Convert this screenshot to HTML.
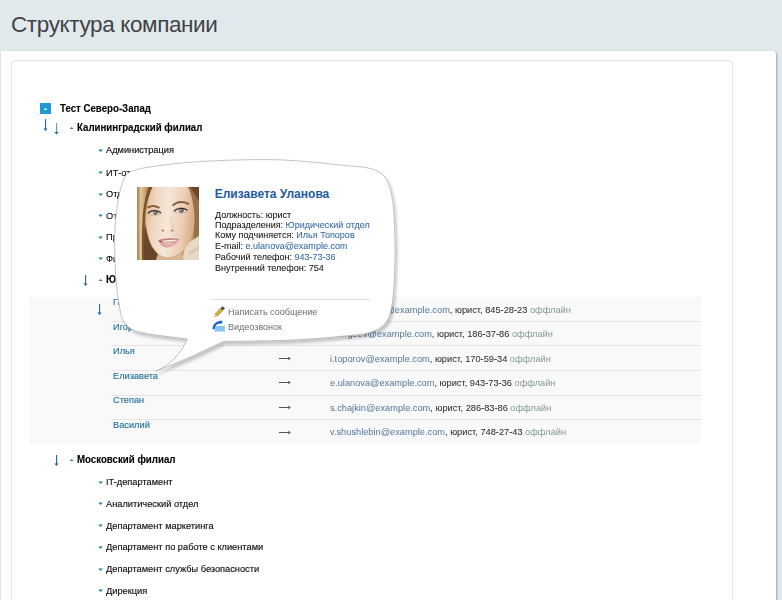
<!DOCTYPE html>
<html><head><meta charset="utf-8">
<style>
html,body{margin:0;padding:0;width:782px;height:600px;overflow:hidden;background:#e2e9ec;font-family:"Liberation Sans",sans-serif;}
.abs{position:absolute;}
#title{left:11px;top:12.4px;font-size:22.5px;letter-spacing:-0.38px;color:#404346;white-space:nowrap;}
#panel{left:0;top:51px;width:776px;height:600px;background:#fff;border-top-right-radius:4px;box-shadow:2px 0 2px -1px rgba(0,0,0,0.3);border-left:1px solid #e4e4e4;box-sizing:border-box;}
#card{left:11px;top:60px;width:722px;height:600px;border:1px solid #e4e4e4;border-radius:4px;box-sizing:border-box;}
.t{position:absolute;white-space:nowrap;color:#0a0a0a;transform-origin:0 0;-webkit-text-stroke:0.14px currentColor;}
.lnk{color:#5a7c9f;}
.lnk2{color:#3468a6;}
.gray{color:#889b9f;}
.tri{position:absolute;width:0;height:0;border-left:2.5px solid transparent;border-right:2.5px solid transparent;}
#tbl{left:29px;top:297px;width:672px;height:147px;background:#f9f9f9;}
.row{position:absolute;left:111px;width:590px;height:1px;background:#e5e5e5;}
</style></head><body>
<div id="title" class="abs">Структура компании</div>
<div id="panel" class="abs"></div>
<div id="card" class="abs"></div>
<div id="tbl" class="abs"></div>
<div class="abs" style="left:40px;top:103px;width:11px;height:11px;background:#1e9bd7;"></div>
<svg class="abs" style="left:40px;top:103px" width="11" height="11"><path d="M3.6,7 H7.4 L5.5,5 Z" fill="#fff"/></svg>
<div class="t " style="left:59.90px;top:101.93px;font-size:10.3px;line-height:14px;letter-spacing:0px;word-spacing:0px;transform:scaleX(0.94);font-weight:bold;color:#000;-webkit-text-stroke:0.12px #000;">Тест Северо-Запад</div>
<svg class="abs" style="left:43.0px;top:119px" width="5" height="12" viewBox="0 0 5 12"><rect x="2" y="0" width="1.1" height="10.5" fill="#23698f"/><path d="M0.4,9.6 L4.6,9.6 L2.5,12 Z" fill="#23698f"/></svg>
<svg class="abs" style="left:54.0px;top:123px" width="5" height="11.5" viewBox="0 0 5 11.5"><rect x="2" y="0" width="1.1" height="10.0" fill="#4fa3c8"/><path d="M0.4,9.1 L4.6,9.1 L2.5,11.5 Z" fill="#1f6a8f"/></svg>
<svg class="abs" style="left:68.5px;top:126.2px" width="6" height="4"><path d="M0.6,3.0 H4.6 L2.6,0.9 Z" fill="#2a7ca6"/></svg>
<div class="t " style="left:76.60px;top:121.33px;font-size:10.3px;line-height:14px;letter-spacing:0px;word-spacing:0px;transform:scaleX(0.94);font-weight:bold;color:#000;-webkit-text-stroke:0.12px #000;">Калининградский филиал</div>
<svg class="abs" style="left:97.5px;top:148.6px" width="6" height="4"><path d="M0.2,0.6 H4.9 L2.55,3.1 Z" fill="#2a7ca6"/></svg>
<div class="t " style="left:106.30px;top:143.27px;font-size:9.9px;line-height:14px;letter-spacing:0px;word-spacing:0px;transform:scaleX(0.936);">Администрация</div>
<svg class="abs" style="left:97.5px;top:170.9px" width="6" height="4"><path d="M0.2,0.6 H4.9 L2.55,3.1 Z" fill="#2a7ca6"/></svg>
<div class="t " style="left:106.30px;top:165.57px;font-size:9.9px;line-height:14px;letter-spacing:0px;word-spacing:0px;transform:scaleX(0.936);">ИТ-отдел</div>
<svg class="abs" style="left:97.5px;top:192.65px" width="6" height="4"><path d="M0.2,0.6 H4.9 L2.55,3.1 Z" fill="#2a7ca6"/></svg>
<div class="t " style="left:106.30px;top:187.32px;font-size:9.9px;line-height:14px;letter-spacing:0px;word-spacing:0px;transform:scaleX(0.936);">Отдел продаж</div>
<svg class="abs" style="left:97.5px;top:214.4px" width="6" height="4"><path d="M0.2,0.6 H4.9 L2.55,3.1 Z" fill="#2a7ca6"/></svg>
<div class="t " style="left:106.30px;top:209.07px;font-size:9.9px;line-height:14px;letter-spacing:0px;word-spacing:0px;transform:scaleX(0.936);">Отдел кадров</div>
<svg class="abs" style="left:97.5px;top:235.5px" width="6" height="4"><path d="M0.2,0.6 H4.9 L2.55,3.1 Z" fill="#2a7ca6"/></svg>
<div class="t " style="left:106.30px;top:230.17px;font-size:9.9px;line-height:14px;letter-spacing:0px;word-spacing:0px;transform:scaleX(0.936);">Производство</div>
<svg class="abs" style="left:97.5px;top:257.2px" width="6" height="4"><path d="M0.2,0.6 H4.9 L2.55,3.1 Z" fill="#2a7ca6"/></svg>
<div class="t " style="left:106.30px;top:251.87px;font-size:9.9px;line-height:14px;letter-spacing:0px;word-spacing:0px;transform:scaleX(0.936);">Финансовый отдел</div>
<svg class="abs" style="left:82.5px;top:275px" width="5" height="11" viewBox="0 0 5 11"><rect x="2" y="0" width="1.1" height="9.5" fill="#23698f"/><path d="M0.4,8.6 L4.6,8.6 L2.5,11 Z" fill="#23698f"/></svg>
<svg class="abs" style="left:97.5px;top:277.5px" width="6" height="4"><path d="M0.6,3.0 H4.6 L2.6,0.9 Z" fill="#2a7ca6"/></svg>
<div class="t " style="left:106.00px;top:273.03px;font-size:10.3px;line-height:14px;letter-spacing:0px;word-spacing:0px;transform:scaleX(0.94);font-weight:bold;color:#000;-webkit-text-stroke:0.12px #000;">Юридический отдел</div>
<svg class="abs" style="left:97.0px;top:304px" width="5" height="11" viewBox="0 0 5 11"><rect x="2" y="0" width="1.1" height="9.5" fill="#23698f"/><path d="M0.4,8.6 L4.6,8.6 L2.5,11 Z" fill="#23698f"/></svg>
<div class="t " style="left:112.50px;top:295.27px;font-size:9.9px;line-height:14px;letter-spacing:0px;word-spacing:0px;transform:scaleX(0.936);color:#24739e;">Галина</div>
<svg class="abs" style="left:278px;top:307px" width="14" height="5"><path d="M1,2.5 H12 M10.3,1.2 L12.3,2.5 L10.3,3.8" stroke="#555" stroke-width="1" fill="none"/></svg>
<div class="t " style="left:329.50px;top:302.87px;font-size:9.9px;line-height:14px;letter-spacing:0px;word-spacing:0px;transform:scaleX(0.936);color:#2c2c2c;-webkit-text-stroke:0.04px currentColor;"><span class="lnk">g.shamshurin@example.com</span>, юрист, 845-28-23 <span class="gray">оффлайн</span></div>
<div class="row" style="top:321px"></div>
<div class="t " style="left:112.50px;top:319.77px;font-size:9.9px;line-height:14px;letter-spacing:0px;word-spacing:0px;transform:scaleX(0.936);color:#24739e;">Игорь</div>
<svg class="abs" style="left:278px;top:332px" width="14" height="5"><path d="M1,2.5 H12 M10.3,1.2 L12.3,2.5 L10.3,3.8" stroke="#555" stroke-width="1" fill="none"/></svg>
<div class="t " style="left:329.50px;top:327.37px;font-size:9.9px;line-height:14px;letter-spacing:0px;word-spacing:0px;transform:scaleX(0.936);color:#2c2c2c;-webkit-text-stroke:0.04px currentColor;"><span class="lnk">i.sergeev@example.com</span>, юрист, 186-37-86 <span class="gray">оффлайн</span></div>
<div class="row" style="top:345px"></div>
<div class="t " style="left:112.50px;top:344.27px;font-size:9.9px;line-height:14px;letter-spacing:0px;word-spacing:0px;transform:scaleX(0.936);color:#24739e;">Илья</div>
<svg class="abs" style="left:278px;top:356px" width="14" height="5"><path d="M1,2.5 H12 M10.3,1.2 L12.3,2.5 L10.3,3.8" stroke="#555" stroke-width="1" fill="none"/></svg>
<div class="t " style="left:329.50px;top:351.87px;font-size:9.9px;line-height:14px;letter-spacing:0px;word-spacing:0px;transform:scaleX(0.936);color:#2c2c2c;-webkit-text-stroke:0.04px currentColor;"><span class="lnk">i.toporov@example.com</span>, юрист, 170-59-34 <span class="gray">оффлайн</span></div>
<div class="row" style="top:370px"></div>
<div class="t " style="left:112.50px;top:368.77px;font-size:9.9px;line-height:14px;letter-spacing:0px;word-spacing:0px;transform:scaleX(0.936);color:#24739e;">Елизавета</div>
<svg class="abs" style="left:278px;top:380px" width="14" height="5"><path d="M1,2.5 H12 M10.3,1.2 L12.3,2.5 L10.3,3.8" stroke="#555" stroke-width="1" fill="none"/></svg>
<div class="t " style="left:329.50px;top:376.37px;font-size:9.9px;line-height:14px;letter-spacing:0px;word-spacing:0px;transform:scaleX(0.936);color:#2c2c2c;-webkit-text-stroke:0.04px currentColor;"><span class="lnk">e.ulanova@example.com</span>, юрист, 943-73-36 <span class="gray">оффлайн</span></div>
<div class="row" style="top:395px"></div>
<div class="t " style="left:112.50px;top:393.27px;font-size:9.9px;line-height:14px;letter-spacing:0px;word-spacing:0px;transform:scaleX(0.936);color:#24739e;">Степан</div>
<svg class="abs" style="left:278px;top:405px" width="14" height="5"><path d="M1,2.5 H12 M10.3,1.2 L12.3,2.5 L10.3,3.8" stroke="#555" stroke-width="1" fill="none"/></svg>
<div class="t " style="left:329.50px;top:400.87px;font-size:9.9px;line-height:14px;letter-spacing:0px;word-spacing:0px;transform:scaleX(0.936);color:#2c2c2c;-webkit-text-stroke:0.04px currentColor;"><span class="lnk">s.chajkin@example.com</span>, юрист, 286-83-86 <span class="gray">оффлайн</span></div>
<div class="row" style="top:419px"></div>
<div class="t " style="left:112.50px;top:417.77px;font-size:9.9px;line-height:14px;letter-spacing:0px;word-spacing:0px;transform:scaleX(0.936);color:#24739e;">Василий</div>
<svg class="abs" style="left:278px;top:430px" width="14" height="5"><path d="M1,2.5 H12 M10.3,1.2 L12.3,2.5 L10.3,3.8" stroke="#555" stroke-width="1" fill="none"/></svg>
<div class="t " style="left:329.50px;top:425.37px;font-size:9.9px;line-height:14px;letter-spacing:0px;word-spacing:0px;transform:scaleX(0.936);color:#2c2c2c;-webkit-text-stroke:0.04px currentColor;"><span class="lnk">v.shushlebin@example.com</span>, юрист, 748-27-43 <span class="gray">оффлайн</span></div>
<svg class="abs" style="left:53.5px;top:455px" width="5" height="11" viewBox="0 0 5 11"><rect x="2" y="0" width="1.1" height="9.5" fill="#23698f"/><path d="M0.4,8.6 L4.6,8.6 L2.5,11 Z" fill="#23698f"/></svg>
<svg class="abs" style="left:68.5px;top:458px" width="6" height="4"><path d="M0.6,3.0 H4.6 L2.6,0.9 Z" fill="#2a7ca6"/></svg>
<div class="t " style="left:77.00px;top:452.93px;font-size:10.3px;line-height:14px;letter-spacing:0px;word-spacing:0px;transform:scaleX(0.94);font-weight:bold;color:#000;-webkit-text-stroke:0.12px #000;">Московский филиал</div>
<svg class="abs" style="left:97.5px;top:480.7px" width="6" height="4"><path d="M0.2,0.6 H4.9 L2.55,3.1 Z" fill="#2a7ca6"/></svg>
<div class="t " style="left:106.30px;top:475.37px;font-size:9.9px;line-height:14px;letter-spacing:0px;word-spacing:0px;transform:scaleX(0.936);">IT-департамент</div>
<svg class="abs" style="left:97.5px;top:502.4px" width="6" height="4"><path d="M0.2,0.6 H4.9 L2.55,3.1 Z" fill="#2a7ca6"/></svg>
<div class="t " style="left:106.30px;top:497.07px;font-size:9.9px;line-height:14px;letter-spacing:0px;word-spacing:0px;transform:scaleX(0.936);">Аналитический отдел</div>
<svg class="abs" style="left:97.5px;top:524.1px" width="6" height="4"><path d="M0.2,0.6 H4.9 L2.55,3.1 Z" fill="#2a7ca6"/></svg>
<div class="t " style="left:106.30px;top:518.77px;font-size:9.9px;line-height:14px;letter-spacing:0px;word-spacing:0px;transform:scaleX(0.936);">Департамент маркетинга</div>
<svg class="abs" style="left:97.5px;top:545.8px" width="6" height="4"><path d="M0.2,0.6 H4.9 L2.55,3.1 Z" fill="#2a7ca6"/></svg>
<div class="t " style="left:106.30px;top:540.47px;font-size:9.9px;line-height:14px;letter-spacing:0px;word-spacing:0px;transform:scaleX(0.936);">Департамент по работе с клиентами</div>
<svg class="abs" style="left:97.5px;top:567.5px" width="6" height="4"><path d="M0.2,0.6 H4.9 L2.55,3.1 Z" fill="#2a7ca6"/></svg>
<div class="t " style="left:106.30px;top:562.17px;font-size:9.9px;line-height:14px;letter-spacing:0px;word-spacing:0px;transform:scaleX(0.936);">Департамент службы безопасности</div>
<svg class="abs" style="left:97.5px;top:589.1999999999999px" width="6" height="4"><path d="M0.2,0.6 H4.9 L2.55,3.1 Z" fill="#2a7ca6"/></svg>
<div class="t " style="left:106.30px;top:583.87px;font-size:9.9px;line-height:14px;letter-spacing:0px;word-spacing:0px;transform:scaleX(0.936);">Дирекция</div>
<svg class="abs" style="left:0;top:0" width="782" height="600">
<defs><filter id="sh" x="-10%" y="-10%" width="130%" height="130%"><feGaussianBlur in="SourceAlpha" stdDeviation="1.8"/><feOffset dx="1.5" dy="3"/><feComponentTransfer><feFuncA type="linear" slope="0.22"/></feComponentTransfer><feMerge><feMergeNode/><feMergeNode in="SourceGraphic"/></feMerge></filter></defs>
<path d="M123.2,180.5 C124.5,177.0 125.5,175.9 127.2,174.2 C128.9,172.5 129.7,171.7 133.5,170.5 C137.3,169.3 140.6,168.4 150.0,167.0 C159.4,165.6 174.2,163.5 190.0,162.3 C205.8,161.1 228.5,160.1 245.0,159.8 C261.5,159.5 271.5,159.3 289.0,160.3 C306.5,161.3 336.8,164.7 350.0,166.0 C363.2,167.3 363.0,166.9 368.0,168.0 C373.0,169.1 376.8,170.4 380.0,172.5 C383.2,174.6 385.2,177.0 387.0,180.3 C388.8,183.6 389.9,187.6 391.0,192.3 C392.1,197.0 392.9,201.4 393.5,208.3 C394.1,215.2 394.6,225.5 394.8,233.7 C395.1,241.9 395.1,248.9 395.0,257.5 C394.9,266.1 394.5,277.4 394.0,285.0 C393.5,292.6 393.1,297.9 392.2,303.4 C391.3,308.9 390.3,314.0 388.5,318.0 C386.7,322.0 384.6,324.7 381.2,327.2 C377.8,329.7 373.5,331.4 368.3,332.8 C363.1,334.2 362.6,334.3 350.0,335.5 C337.4,336.7 314.1,339.0 293.0,340.0 C271.9,341.0 235.1,341.2 223.5,341.4 Q192,357 156,371.4 Q178,361.3 187.5,339 C181.0,338.1 157.7,335.5 148.4,333.8 C139.1,332.1 135.8,331.6 131.5,329.0 C127.2,326.4 124.5,323.2 122.3,318.4 C120.1,313.6 119.3,304.7 118.4,300.0 C117.5,295.3 117.5,295.0 117.0,290.0 C116.5,285.0 115.8,278.3 115.4,270.0 C115.0,261.7 114.5,249.2 114.6,240.0 C114.7,230.8 115.2,222.5 116.0,215.0 C116.8,207.5 118.1,200.8 119.3,195.0 C120.5,189.2 121.9,184.0 123.2,180.5 Z" fill="#fff" stroke="#b4b4b4" stroke-width="0.8" filter="url(#sh)"/>
</svg>
<svg class="abs" style="left:137px;top:187px" width="62" height="73" viewBox="0 0 62 73">
<defs>
<linearGradient id="skin" x1="0" y1="0" x2="1" y2="0.15">
<stop offset="0" stop-color="#e0b898"/><stop offset="0.22" stop-color="#f0d6c0"/><stop offset="0.5" stop-color="#f6e6d8"/><stop offset="0.8" stop-color="#eccfb6"/><stop offset="1" stop-color="#d9b08c"/>
</linearGradient>
<linearGradient id="hairL" x1="0" y1="0" x2="1" y2="0">
<stop offset="0" stop-color="#a8845c"/><stop offset="0.3" stop-color="#dcbe8e"/><stop offset="0.6" stop-color="#c29464"/><stop offset="1" stop-color="#b88a5c"/>
</linearGradient>
<radialGradient id="lip" cx="0.5" cy="0.6" r="0.55"><stop offset="0" stop-color="#ecbcb6"/><stop offset="1" stop-color="#d0948e"/></radialGradient>
<filter id="soft" x="0" y="0" width="100%" height="100%"><feGaussianBlur stdDeviation="0.5"/></filter>
</defs>
<g filter="url(#soft)">
<rect width="62" height="73" fill="#c49a6c"/>
<path d="M0,0 H16 C12,20 9,45 8,73 H0 Z" fill="url(#hairL)"/>
<path d="M3,0 H5 C4,25 4,50 4.5,73 H3 C2.5,50 2.5,25 3,0Z" fill="#e6cc9c" opacity="0.8"/>
<path d="M11.5,0 H16 C12,8 9.5,16 8.5,24 C7.5,34 7.5,50 8,73 H5 C4.8,55 5,38 6,26 C7,16 9,7 11.5,0 Z" fill="#7a5232"/>
<path d="M8,36 C9.5,46 11.5,54 15,60 C17,63 19,65 21,67 L19,73 H7 C7,60 7,48 8,36Z" fill="#6a452a"/>
<path d="M49,0 H62 V58 H56 C58,40 57,18 49,0Z" fill="#9a6e46"/>
<path d="M53,0 H62 V14 C59,9 56,4 53,0Z" fill="#6a4628"/>
<path d="M49,57 L62,49 V73 H45 Z" fill="#e6dac4"/>
<path d="M51,65 L62,59 V63 L53,68 Z" fill="#d8cab0"/>
<path d="M15.5,0 H51 C55,8 58,22 57.5,34 C57,48 52,60 42,67 C37,70.5 30,71 25,69.5 C19,66 15,60 13.5,55 C11,48 9,40 9,35 C9,22 11,10 15.5,0 Z" fill="url(#skin)"/>
<path d="M21,67 C27,71 35,72 44,65 L47,73 H19 Z" fill="#d8b490"/>
<path d="M10.5,20.6 C13.5,18.6 18,18.4 22.5,20.8" stroke="#8a5c38" stroke-width="1.9" fill="none"/>
<path d="M35.5,18.6 C40,14.6 46,14.1 52,17.2" stroke="#8a5c38" stroke-width="1.9" fill="none"/>
<ellipse cx="17.5" cy="25.5" rx="7" ry="3.6" fill="#c89a80" opacity="0.45"/>
<ellipse cx="43.8" cy="23.5" rx="7" ry="3.6" fill="#c89a80" opacity="0.45"/>
<path d="M12,26 C14.5,23.8 20,23.6 23.2,26.2 C20,28.2 15,28.1 12,26Z" fill="#e2d8d2"/>
<ellipse cx="18.4" cy="25.8" rx="2.4" ry="2.1" fill="#5f676b"/>
<circle cx="17.6" cy="25.4" r="0.7" fill="#dfe6e8"/>
<path d="M11,26.2 C14,22.8 20.5,22.6 24,26" stroke="#3e2c22" stroke-width="1.3" fill="none"/>
<path d="M38,24 C40.5,21.6 46,21.4 49.6,23.2 C46.5,26.2 41,26.4 38,24Z" fill="#e2d8d2"/>
<ellipse cx="44.4" cy="23.7" rx="2.5" ry="2.1" fill="#5c656c"/>
<circle cx="43.6" cy="23.3" r="0.7" fill="#dfe6e8"/>
<path d="M37,24.3 C40,20.8 46.5,20.5 50.5,23.3" stroke="#3e2c22" stroke-width="1.3" fill="none"/>
<path d="M33.5,30 C35,35 36.5,39 36,42" stroke="#e2c0a6" stroke-width="2" fill="none" opacity="0.45"/>
<ellipse cx="30.5" cy="41.5" rx="3.5" ry="2" fill="#f8ece2" opacity="0.6"/>
<ellipse cx="25.8" cy="43.5" rx="1.6" ry="0.9" fill="#b88a72"/>
<ellipse cx="35.2" cy="43.5" rx="1.6" ry="0.9" fill="#b88a72"/>
<path d="M21.5,53.5 C26,50.8 35,50.4 42,52.2 C40,57.8 34,60.6 29.5,60.4 C25,60 22.5,57 21.5,53.5Z" fill="url(#lip)"/>
<path d="M25,54.4 C29,53.6 35,53.3 40,53.1" stroke="#f6ece8" stroke-width="1.2" fill="none"/>
<path d="M21.8,54 C23,54.6 24.5,54.8 25.5,54.4" stroke="#7a4040" stroke-width="1" fill="none"/>
<path d="M21.5,53.5 C26,52.8 35,52.2 42,52.2" stroke="#a87070" stroke-width="0.6" fill="none"/>
</g>
</svg>
<div class="t " style="left:214.70px;top:187.34px;font-size:12px;line-height:14px;letter-spacing:0px;word-spacing:0px;color:#1d5c9f;font-weight:bold;-webkit-text-stroke:0px currentColor;">Елизавета Уланова</div>
<div class="t " style="left:214.70px;top:207.57px;font-size:9.6px;line-height:14px;letter-spacing:0px;word-spacing:0px;transform:scaleX(0.94);color:#111;-webkit-text-stroke:0.06px currentColor;">Должность: юрист</div>
<div class="t " style="left:214.70px;top:217.97px;font-size:9.6px;line-height:14px;letter-spacing:0px;word-spacing:0px;transform:scaleX(0.94);color:#111;-webkit-text-stroke:0.06px currentColor;">Подразделения: <span class="lnk2">Юридический отдел</span></div>
<div class="t " style="left:214.70px;top:228.27px;font-size:9.6px;line-height:14px;letter-spacing:0px;word-spacing:0px;transform:scaleX(0.94);color:#111;-webkit-text-stroke:0.06px currentColor;">Кому подчиняется: <span class="lnk2">Илья Топоров</span></div>
<div class="t " style="left:214.70px;top:239.17px;font-size:9.6px;line-height:14px;letter-spacing:0px;word-spacing:0px;transform:scaleX(0.94);color:#111;-webkit-text-stroke:0.06px currentColor;">E-mail: <span class="lnk2">e.ulanova@example.com</span></div>
<div class="t " style="left:214.70px;top:250.17px;font-size:9.6px;line-height:14px;letter-spacing:0px;word-spacing:0px;transform:scaleX(0.94);color:#111;-webkit-text-stroke:0.06px currentColor;">Рабочий телефон: <span class="lnk2">943-73-36</span></div>
<div class="t " style="left:214.70px;top:260.97px;font-size:9.6px;line-height:14px;letter-spacing:0px;word-spacing:0px;transform:scaleX(0.94);color:#111;-webkit-text-stroke:0.06px currentColor;">Внутренний телефон: 754</div>
<div class="abs" style="left:211px;top:299px;width:159px;height:1px;background:#dedede;"></div>
<div class="t " style="left:227.60px;top:304.67px;font-size:9.6px;line-height:14px;letter-spacing:0px;word-spacing:0px;transform:scaleX(0.94);color:#6d6d6d;-webkit-text-stroke:0px currentColor;">Написать сообщение</div>
<div class="t " style="left:227.60px;top:320.17px;font-size:9.6px;line-height:14px;letter-spacing:0px;word-spacing:0px;transform:scaleX(0.94);color:#6d6d6d;-webkit-text-stroke:0px currentColor;">Видеозвонок</div>
<svg class="abs" style="left:210px;top:302px" width="20" height="32" viewBox="0 0 20 32">
<g transform="translate(0,1)"><path d="M4.84,11 L10.49,5.35 L12.75,7.61 L7.1,13.26 Z" fill="#cfa531" stroke="#8d6a1c" stroke-width="0.45"/>
<path d="M5.8,11.6 L11.2,6.2" stroke="#f0d26a" stroke-width="0.8"/>
<path d="M4.84,11 L7.1,13.26 L4.2,13.9 Z" fill="#e2c48c"/>
<path d="M4.9,13.1 L4.2,13.9 L5.3,13.6 Z" fill="#555"/>
<path d="M10.49,5.35 L12.67,3.17 L14.93,5.43 L12.75,7.61 Z" fill="#4e4e4e"/></g>
<path d="M4.5,24 H12.5 L14.8,23 V30.5 L12.5,29.5 H4.5 Z" fill="#86c4ee"/>
<path d="M3.6,26.2 C3.8,22.5 7,20.2 11.2,20" stroke="#1566c4" stroke-width="2.3" fill="none" stroke-linecap="round"/>
<path d="M10.2,19 L11.8,18.6 L12.3,21.2 L10.6,21.5 Z" fill="#1566c4"/>
</svg>
</body></html>
